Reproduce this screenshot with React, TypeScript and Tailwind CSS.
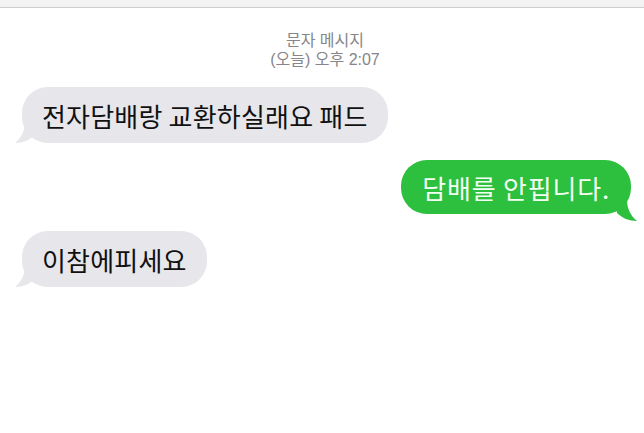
import type React from "react"

const font = { fontFamily: '"Noto Sans CJK KR", "Noto Sans", sans-serif' }
const headerFont = { fontFamily: '"Liberation Sans", "Noto Sans CJK KR", sans-serif' }

function Tail({ side, color }: { side: "left" | "right"; color: string }) {
  const isLeft = side === "left"
  return (
    <svg
      width="22"
      height="22"
      viewBox="0 0 22 22"
      className={isLeft ? "absolute -left-[7px] -bottom-[1px]" : "absolute -right-[6px] bottom-[-8px]"}
      style={isLeft ? undefined : { transform: "scaleX(-1)" }}
      aria-hidden="true"
    >
      <path d="M22 0 L10 0 C10 9 6 16 0 21 C8 21 15 18 20 13 Z" fill={color} />
    </svg>
  )
}

function Bubble({
  children,
  side,
}: {
  children: React.ReactNode
  side: "left" | "right"
}) {
  const isLeft = side === "left"
  return (
    <div className={isLeft ? "flex justify-start pl-[22px]" : "flex justify-end pr-[13px]"}>
      <div
        className={
          isLeft
            ? "relative rounded-[26px] bg-[#e6e6eb] px-[20px] h-[56px] flex items-center text-[26px] tracking-[0.2px] text-[#111] whitespace-nowrap"
            : "relative rounded-[26px] bg-[#2dbf3e] px-[21px] h-[54px] flex items-center text-[26px] tracking-[0.8px] text-[#f4fff4] whitespace-nowrap"
        }
        style={font}
      >
        {children}
        <Tail side={side} color={isLeft ? "#e6e6eb" : "#2dbf3e"} />
      </div>
    </div>
  )
}

export default function App() {
  return (
    <div className="w-[644px] h-[433px] overflow-hidden bg-white" style={font}>
      <div className="h-[8px] bg-[#f3f3f3] border-b border-[#cdcdcd]" />
      <div
        className="pt-[23px] flex flex-col items-center text-[16px] leading-[19px] text-[#85858a] pl-[6px]"
        style={headerFont}
      >
        <span>문자 메시지</span>
        <span>(오늘) 오후 2:07</span>
      </div>
      <div className="mt-[18px] flex flex-col">
        <Bubble side="left">전자담배랑 교환하실래요 패드</Bubble>
        <div className="mt-[17px]">
          <Bubble side="right">담배를 안핍니다.</Bubble>
        </div>
        <div className="mt-[17px]">
          <Bubble side="left">이참에피세요</Bubble>
        </div>
      </div>
    </div>
  )
}
